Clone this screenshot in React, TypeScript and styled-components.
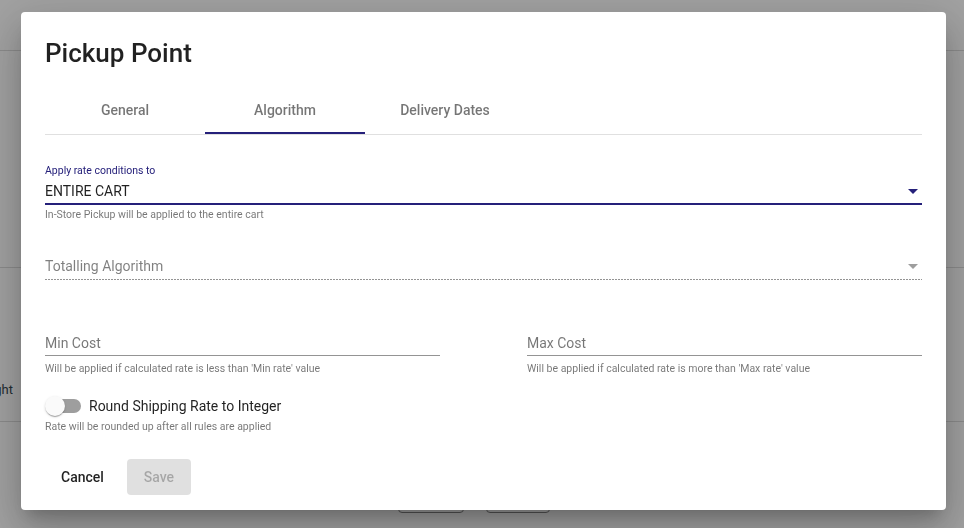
import React from 'react'
import styled, { createGlobalStyle } from 'styled-components'

const PRIMARY = '#25207a'
const TEXT = 'rgba(0, 0, 0, 0.87)'
const MUTED = 'rgba(0, 0, 0, 0.54)'

const GlobalStyle = createGlobalStyle`
	html, body {
		margin: 0;
		padding: 0;
	}
	body {
		font-family: Roboto, 'Noto Sans', 'Liberation Sans', sans-serif;
		background: #fff;
		overflow: hidden;
	}
`

// --- page behind the dialog ---

const Page = styled.div`
	height: 528px;
	display: flex;
	flex-direction: column;
	color: ${TEXT};
`
const PageHeader = styled.div`
	height: 50px;
	flex-shrink: 0;
	border-bottom: 1px solid #dcdcdc;
`
const PageSection = styled.div`
	height: 216px;
	flex-shrink: 0;
	border-bottom: 1px solid #dcdcdc;
`
const PageRow = styled.div`
	height: 154px;
	flex-shrink: 0;
	border-bottom: 1px solid #dcdcdc;
	padding-top: 114px;
	box-sizing: border-box;
`
const RowLabel = styled.div`
	width: 13px;
	display: flex;
	justify-content: flex-end;
	white-space: nowrap;
	font-size: 13px;
	line-height: 16px;
	color: #37474f;
`
const PageFooter = styled.div`
	display: flex;
	gap: 22px;
	padding: 55px 0 0 398px;
`
const OutlineButton = styled.div<{ $w: number }>`
	width: ${p => p.$w}px;
	height: 36px;
	box-sizing: border-box;
	border: 1px solid #888;
	border-radius: 4px;
`

// --- dialog ---

const Backdrop = styled.div`
	position: fixed;
	inset: 0;
	background: rgba(0, 0, 0, 0.37);
	display: flex;
	align-items: flex-start;
	padding: 12px 0 0 21px;
`
const Dialog = styled.div`
	width: 925px;
	background: #fff;
	border-radius: 4px;
	box-shadow: 0px 11px 15px -7px rgba(0, 0, 0, 0.2), 0px 24px 38px 3px rgba(0, 0, 0, 0.14),
		0px 9px 46px 8px rgba(0, 0, 0, 0.12);
	display: flex;
	flex-direction: column;
`
const Title = styled.h2`
	margin: 0;
	padding: 25px 24px 17px;
	font-size: 26px;
	line-height: 32px;
	font-weight: 500;
	color: ${TEXT};
`
const Content = styled.div`
	padding: 0 24px;
	display: flex;
	flex-direction: column;
`
const Tabs = styled.div`
	display: flex;
	height: 48px;
	border-bottom: 1px solid #e0e0e0;
`
const Tab = styled.div<{ $active?: boolean }>`
	position: relative;
	width: 160px;
	display: flex;
	align-items: center;
	justify-content: center;
	font-size: 14px;
	font-weight: 500;
	color: ${MUTED};

	&::after {
		content: '';
		position: absolute;
		left: 0;
		right: 0;
		bottom: 0;
		height: 2px;
		background: ${p => (p.$active ? PRIMARY : 'transparent')};
	}
`
const Field = styled.div<{ $top: number }>`
	margin-top: ${p => p.$top}px;
	display: flex;
	flex-direction: column;
	flex: 1;
`
const FieldLabel = styled.div`
	font-size: 10.5px;
	line-height: 16px;
	color: ${PRIMARY};
`
const InputRow = styled.div<{ $line: 'focus' | 'plain' | 'dotted' }>`
	height: 24px;
	display: flex;
	align-items: center;
	justify-content: space-between;
	font-size: 14px;
	color: ${TEXT};
	border-bottom: ${p => (p.$line === 'focus' ? `2px solid ${PRIMARY}` : p.$line === 'plain' ? '1px solid rgba(0,0,0,0.42)' : 'none')};
	${p =>
		p.$line === 'dotted' &&
		`
		padding-bottom: 2px;
		background-image: linear-gradient(to right, rgba(0,0,0,0.42) 60%, transparent 0%);
		background-size: 3px 1px;
		background-repeat: repeat-x;
		background-position: left bottom;
	`}
`
const Placeholder = styled.span<{ $tone?: number }>`
	color: rgba(0, 0, 0, ${p => p.$tone ?? 0.54});
`
const ArrowIcon = styled.svg`
	width: 24px;
	height: 24px;
	margin-right: -3px;
	fill: currentColor;
`
const Helper = styled.div<{ $top?: number }>`
	margin-top: ${p => p.$top ?? 4}px;
	font-size: 10.5px;
	line-height: 16px;
	color: ${MUTED};
`
const Columns = styled.div`
	display: flex;
	gap: 87px;
	margin-top: 51px;
`
const SwitchRow = styled.label`
	margin-top: 17px;
	height: 24px;
	display: flex;
	align-items: center;
	gap: 8px;
	font-size: 14px;
	color: ${TEXT};
`
const Switch = styled.span`
	position: relative;
	width: 36px;
	height: 20px;
	display: inline-block;

	&::before {
		content: '';
		position: absolute;
		left: 2px;
		right: 0;
		top: 3px;
		height: 14px;
		border-radius: 7px;
		background: #9e9e9e;
	}
	&::after {
		content: '';
		position: absolute;
		left: 0;
		top: 0;
		width: 20px;
		height: 20px;
		border-radius: 50%;
		background: #fafafa;
		box-shadow: 0px 2px 1px -1px rgba(0, 0, 0, 0.2), 0px 1px 1px 0px rgba(0, 0, 0, 0.14),
			0px 1px 3px 0px rgba(0, 0, 0, 0.12);
	}
`
const Actions = styled.div`
	display: flex;
	gap: 7px;
	padding: 24px 24px 15px;
`
const Button = styled.button<{ $disabled?: boolean }>`
	height: 36px;
	min-width: 64px;
	padding: 0 16px;
	border: none;
	border-radius: 4px;
	font-family: inherit;
	font-size: 14px;
	font-weight: 500;
	background: ${p => (p.$disabled ? 'rgba(0,0,0,0.12)' : 'transparent')};
	color: ${p => (p.$disabled ? 'rgba(0,0,0,0.26)' : TEXT)};
`

function DropArrow({ color }: { color: string }) {
	return (
		<ArrowIcon viewBox="0 0 24 24" style={{ color }}>
			<path d="M7 10l5 5 5-5z" />
		</ArrowIcon>
	)
}

export default function App() {
	return (
		<>
			<GlobalStyle />
			<Page>
				<PageHeader />
				<PageSection />
				<PageRow>
					<RowLabel>Weight</RowLabel>
				</PageRow>
				<PageFooter>
					<OutlineButton $w={66} />
					<OutlineButton $w={64} />
				</PageFooter>
			</Page>
			<Backdrop>
				<Dialog>
					<Title>Pickup Point</Title>
					<Content>
						<Tabs>
							<Tab>General</Tab>
							<Tab $active>Algorithm</Tab>
							<Tab>Delivery Dates</Tab>
						</Tabs>

						<Field $top={28}>
							<FieldLabel>Apply rate conditions to</FieldLabel>
							<InputRow $line="focus">
								<span>ENTIRE CART</span>
								<DropArrow color={PRIMARY} />
							</InputRow>
							<Helper $top={2}>In-Store Pickup will be applied to the entire cart</Helper>
						</Field>

						<Field $top={31}>
							<InputRow $line="dotted">
								<Placeholder $tone={0.5}>Totalling Algorithm</Placeholder>
								<DropArrow color="#9e9e9e" />
							</InputRow>
						</Field>

						<Columns>
							<Field $top={0}>
								<InputRow $line="plain">
									<Placeholder>Min Cost</Placeholder>
								</InputRow>
								<Helper $top={5}>Will be applied if calculated rate is less than 'Min rate' value</Helper>
							</Field>
							<Field $top={0}>
								<InputRow $line="plain">
									<Placeholder>Max Cost</Placeholder>
								</InputRow>
								<Helper $top={5}>Will be applied if calculated rate is more than 'Max rate' value</Helper>
							</Field>
						</Columns>

						<SwitchRow>
							<Switch />
							Round Shipping Rate to Integer
						</SwitchRow>
						<Helper $top={1}>Rate will be rounded up after all rules are applied</Helper>
					</Content>
					<Actions>
						<Button>Cancel</Button>
						<Button $disabled>Save</Button>
					</Actions>
				</Dialog>
			</Backdrop>
		</>
	)
}
